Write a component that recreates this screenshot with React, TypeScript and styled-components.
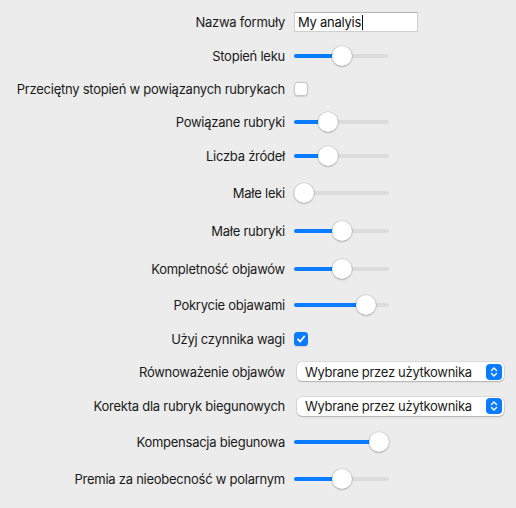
import React from "react";
import styled, { createGlobalStyle } from "styled-components";

const GlobalStyle = createGlobalStyle`
  html, body {
    margin: 0;
    padding: 0;
    background: #ececec;
  }
  body {
    font-family: Inter, "Noto Sans", "Liberation Sans", sans-serif;
    letter-spacing: -0.25px;
  }
`;

const Panel = styled.div`
  width: 516px;
  height: 508px;
  box-sizing: border-box;
  padding-top: 5px;
  background: #ececec;
  display: flex;
  flex-direction: column;
`;

const Row = styled.div<{ $h: number }>`
  display: grid;
  grid-template-columns: 285px 1fr;
  column-gap: 9px;
  align-items: center;
  height: ${(p) => p.$h}px;
`;

const Label = styled.div`
  text-align: right;
  font-size: 13px;
  color: #1a1a1a;
  white-space: nowrap;
`;

const TextField = styled.div`
  width: 124px;
  height: 20px;
  box-sizing: border-box;
  background: #fff;
  border: 1px solid #cfcfcf;
  border-top-color: #b4b4b4;
  padding: 0 3px;
  display: flex;
  align-items: center;
  font-size: 13px;
  color: #111;
`;

const Caret = styled.span`
  display: inline-block;
  width: 1px;
  height: 15px;
  margin-left: 1px;
  background: #111;
`;

const SliderTrack = styled.div`
  position: relative;
  width: 95px;
  height: 4px;
  border-radius: 2px;
  background: #dcdcdc;
`;

const SliderFill = styled.div`
  position: absolute;
  left: 0;
  top: 0;
  bottom: 0;
  border-radius: 2px;
  background: #0a7cff;
`;

const SliderKnob = styled.div`
  position: absolute;
  top: 50%;
  width: 20px;
  height: 20px;
  margin: -10px 0 0 -10px;
  border-radius: 50%;
  background: #fff;
  box-shadow: 0 0.5px 2px rgba(0, 0, 0, 0.35), 0 0 0 0.5px rgba(0, 0, 0, 0.08);
`;

const Box = styled.div<{ $checked?: boolean }>`
  width: 14px;
  height: 14px;
  box-sizing: border-box;
  border-radius: 3.5px;
  background: ${(p) => (p.$checked ? "#0a7cff" : "#fff")};
  border: ${(p) => (p.$checked ? "none" : "1px solid #c4c4c4")};
  box-shadow: 0 0.5px 1px rgba(0, 0, 0, 0.12);
  display: flex;
  align-items: center;
  justify-content: center;
`;

const Select = styled.div`
  margin-left: 3px;
  width: 207px;
  height: 19px;
  box-sizing: border-box;
  border-radius: 5px;
  background: #fff;
  box-shadow: 0 0 0 0.5px rgba(0, 0, 0, 0.14), 0 1px 1.5px rgba(0, 0, 0, 0.2);
  display: flex;
  align-items: center;
  justify-content: space-between;
  padding: 0 2px 0 8px;
  font-size: 13px;
  letter-spacing: -0.3px;
  color: #1a1a1a;
`;

const Stepper = styled.div`
  width: 16px;
  height: 16px;
  border-radius: 4px;
  background: #0a7cff;
  display: flex;
  align-items: center;
  justify-content: center;
`;

function Slider({ value }: { value: number }) {
  const pos = 10 + value * 75;
  return (
    <SliderTrack>
      <SliderFill style={{ width: pos }} />
      <SliderKnob style={{ left: pos }} />
    </SliderTrack>
  );
}

function Check({ checked }: { checked?: boolean }) {
  return (
    <Box $checked={checked}>
      {checked && (
        <svg width="10" height="10" viewBox="0 0 10 10">
          <path d="M2 5.3 L4.2 7.5 L8.2 2.5" fill="none" stroke="#fff" strokeWidth="1.8" strokeLinecap="round" strokeLinejoin="round" />
        </svg>
      )}
    </Box>
  );
}

function PopUp({ text }: { text: string }) {
  return (
    <Select>
      <span>{text}</span>
      <Stepper>
        <svg width="8" height="12" viewBox="0 0 8 12">
          <path d="M1.5 4.5 L4 2 L6.5 4.5 M1.5 7.5 L4 10 L6.5 7.5" fill="none" stroke="#fff" strokeWidth="1.4" strokeLinecap="round" strokeLinejoin="round" />
        </svg>
      </Stepper>
    </Select>
  );
}

type Item =
  | { label: string; h: number; kind: "text"; value: string }
  | { label: string; h: number; kind: "slider"; value: number }
  | { label: string; h: number; kind: "check"; value: boolean }
  | { label: string; h: number; kind: "select"; value: string };

const items: Item[] = [
  { label: "Nazwa formuły", h: 34, kind: "text", value: "My analyis" },
  { label: "Stopień leku", h: 33, kind: "slider", value: 0.5 },
  { label: "Przeciętny stopień w powiązanych rubrykach", h: 33, kind: "check", value: false },
  { label: "Powiązane rubryki", h: 33, kind: "slider", value: 0.32 },
  { label: "Liczba źródeł", h: 36, kind: "slider", value: 0.32 },
  { label: "Małe leki", h: 38, kind: "slider", value: 0 },
  { label: "Małe rubryki", h: 38, kind: "slider", value: 0.5 },
  { label: "Kompletność objawów", h: 38, kind: "slider", value: 0.5 },
  { label: "Pokrycie objawami", h: 34, kind: "slider", value: 0.83 },
  { label: "Użyj czynnika wagi", h: 33, kind: "check", value: true },
  { label: "Równoważenie objawów", h: 33, kind: "select", value: "Wybrane przez użytkownika" },
  { label: "Korekta dla rubryk biegunowych", h: 36, kind: "select", value: "Wybrane przez użytkownika" },
  { label: "Kompensacja biegunowa", h: 36, kind: "slider", value: 1 },
  { label: "Premia za nieobecność w polarnym", h: 38, kind: "slider", value: 0.5 },
];

function Control({ item }: { item: Item }) {
  switch (item.kind) {
    case "text":
      return (
        <TextField>
          {item.value}
          <Caret />
        </TextField>
      );
    case "slider":
      return <Slider value={item.value} />;
    case "check":
      return <Check checked={item.value} />;
    case "select":
      return <PopUp text={item.value} />;
  }
}

export default function App() {
  return (
    <>
      <GlobalStyle />
      <Panel>
        {items.map((item) => (
          <Row key={item.label} $h={item.h}>
            <Label>{item.label}</Label>
            <div>
              <Control item={item} />
            </div>
          </Row>
        ))}
      </Panel>
    </>
  );
}
